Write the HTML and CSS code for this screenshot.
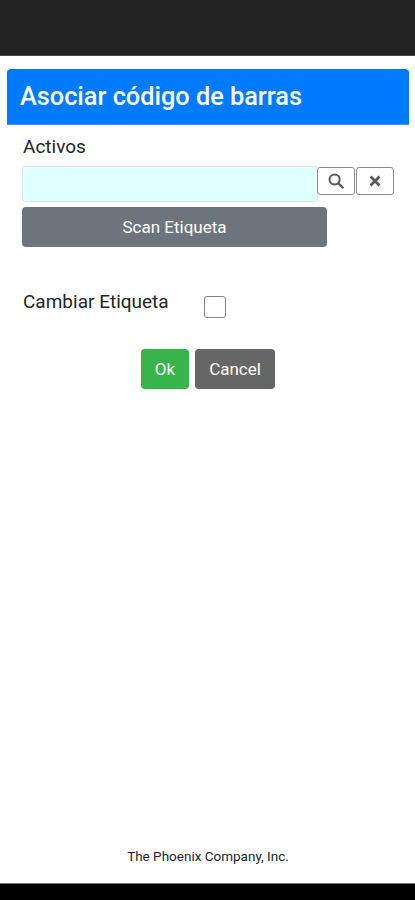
FILE: index.html
```html
<!DOCTYPE html>
<html lang="es">
<head>
<meta charset="utf-8">
<title>Asociar código de barras</title>
<link rel="stylesheet" href="styles.css">
</head>
<body>
<div class="status-bar"></div>
<main class="page">
  <h1 class="card-header"><span>Asociar código de barras</span></h1>
  <form class="form">
    <label class="label" for="activos"><span>Activos</span></label>
    <div class="input-row">
      <input class="text-input" id="activos" type="text">
      <button class="icon-button" type="button" aria-label="Buscar">
        <svg width="16" height="16" viewBox="0 0 16 16"><circle cx="6.6" cy="6.5" r="5.1" fill="none" stroke="currentColor" stroke-width="2"/><path d="M10.4 10.4L14.7 14.5" stroke="currentColor" stroke-width="2.4" stroke-linecap="round"/></svg>
      </button>
      <button class="icon-button" type="button" aria-label="Borrar">
        <svg width="12" height="12" viewBox="0 0 12 12"><path d="M2.5 2.5L9.5 9.5M9.5 2.5L2.5 9.5" stroke="currentColor" stroke-width="2.8" stroke-linecap="square"/></svg>
      </button>
    </div>
    <button class="button scan" type="button"><span>Scan Etiqueta</span></button>
    <div class="check-row">
      <label class="check-label" for="cambiar"><span>Cambiar Etiqueta</span></label>
      <input class="checkbox" id="cambiar" type="checkbox">
    </div>
    <div class="actions">
      <button class="button ok" type="button"><span>Ok</span></button>
      <button class="button cancel" type="button"><span>Cancel</span></button>
    </div>
  </form>
  <footer class="footer"><span>The Phoenix Company, Inc.</span></footer>
</main>
<div class="nav-bar"></div>
</body>
</html>
```
FILE: styles.css
```css
* {
  box-sizing: border-box;
}

body {
  margin: 0;
  height: 900px;
  display: flex;
  flex-direction: column;
  background: #fff;
  color: #212529;
  font-family: Roboto, "Liberation Sans", sans-serif;
}

.status-bar {
  height: 56px;
  background: #232323;
  border-bottom: 1px solid #4a4a4a;
}

.page {
  flex: 1;
  display: flex;
  flex-direction: column;
  padding: 13px 6px 0 7px;
}

.card-header {
  margin: 0;
  height: 56px;
  padding-left: 13px;
  border-radius: 4px 4px 0 0;
  border-bottom: 1px solid #3f94f5;
  background: #007bff;
  color: #fff;
  font-size: 25.3px;
  font-weight: 500;
  line-height: 55px;
  white-space: nowrap;
}

.form {
  padding: 0 14px 0 15px;
}

.label {
  display: block;
  height: 41px;
  padding: 10px 0 0 1px;
  font-size: 19px;
  line-height: 24px;
}

.input-row {
  display: flex;
  align-items: flex-start;
}

.text-input {
  width: 296px;
  height: 36px;
  border: 1px solid #dce8e8;
  border-radius: 3px;
  background: #e0ffff;
}

.icon-button {
  display: flex;
  align-items: center;
  justify-content: center;
  width: 38px;
  height: 28px;
  margin: 1px 0 0 -1px;
  padding: 0;
  border: 1px solid #8b8b8b;
  border-radius: 3px;
  background: #fff;
  color: #555a5e;
}

.icon-button + .icon-button {
  margin-left: 1px;
}

.button {
  height: 40px;
  padding: 0;
  border: 0;
  border-radius: 4px;
  color: #fff;
  font: 400 17px/40px Roboto, "Liberation Sans", sans-serif;
}

.scan {
  display: block;
  width: 305px;
  margin-top: 5px;
  background: #6c757d;
}

.check-row {
  display: flex;
  height: 102px;
  padding-top: 43px;
}

.check-label {
  width: 182px;
  padding-left: 1px;
  font-size: 19px;
  line-height: 24px;
}

.checkbox {
  appearance: none;
  width: 22px;
  height: 22px;
  margin: 6px 0 0;
  border: 1px solid #858585;
  border-radius: 3px;
  background: #fff;
}

.actions {
  display: flex;
  gap: 6px;
  padding-left: 119px;
}

.ok {
  width: 48px;
  background: #37b44a;
}

.cancel {
  width: 80px;
  background: #666;
}

.footer {
  margin-top: auto;
  height: 36px;
  text-align: center;
  font-size: 13.5px;
  line-height: 18px;
}

.nav-bar {
  height: 17px;
  background: #000;
  border-top: 1px solid #777;
}
```
